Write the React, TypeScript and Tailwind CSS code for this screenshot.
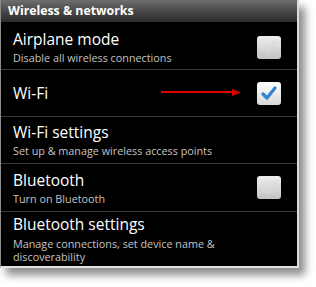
import React from "react";

const font = { fontFamily: '"Open Sans", "Noto Sans", sans-serif' };

function Check({ checked }: { checked: boolean }) {
  return (
    <div
      className={
        "w-[24px] h-[23px] rounded-[3px] flex items-center justify-center " +
        (checked
          ? "bg-gradient-to-b from-[#ffffff] to-[#d8d8d8]"
          : "bg-gradient-to-b from-[#efefef] to-[#c2c2c2]")
      }
    >
      <svg width="18" height="16" viewBox="0 0 18 16">
        <path
          d="M3 9 L7 13 L15 3"
          fill="none"
          stroke={checked ? "#3382d2" : "#d9d9d9"}
          strokeWidth={checked ? 3.2 : 2.2}
          strokeLinecap="round"
          strokeLinejoin="round"
        />
      </svg>
    </div>
  );
}

function Row({
  title,
  sub,
  h,
  check,
  last,
  children,
}: {
  title: string;
  sub?: React.ReactNode;
  h: string;
  check?: boolean;
  last?: boolean;
  children?: React.ReactNode;
}) {
  return (
    <div
      className={
        "relative flex items-center justify-between pl-3 pr-4 " +
        h +
        (last ? "" : " border-b border-[#3a3a3a]")
      }
    >
      <div className="flex flex-col">
        <div className="text-[15.5px] leading-[19px] text-white">{title}</div>
        {sub && (
          <div className="text-[10.8px] leading-[12px] text-[#c4c4c4] mt-[3px]">{sub}</div>
        )}
      </div>
      {check !== undefined && <Check checked={check} />}
      {children}
    </div>
  );
}

export default function App() {
  return (
    <div className="w-[316px] h-[287px] bg-white overflow-hidden" style={font}>
      <div className="w-[299px] h-[268px] bg-black border-l border-[#8a8a8a] border-r-2 border-r-[#dcdcdc] border-b-2 border-b-[#e4e4e4] shadow-[6px_7px_8px_rgba(0,0,0,0.45)] flex flex-col">
        <div className="h-[22px] bg-gradient-to-b from-[#6e6e6e] to-[#2a2a2a] flex items-center pl-[7px]">
          <span className="text-[12.3px] font-bold text-white leading-none">Wireless &amp; networks</span>
        </div>
        <Row title="Airplane mode" sub="Disable all wireless connections" h="h-[48px] pt-[3px]" check={false} />
        <Row title="Wi-Fi" h="h-[47px]" check={true}>
          <div className="absolute left-[160px] top-[19px] w-[80px] h-[6px] flex items-center">
            <div className="flex-1 h-[2px] bg-[#e00000]" />
            <svg width="9" height="7" viewBox="0 0 9 7" className="-ml-[1px]">
              <polygon points="0,0 9,3.5 0,7" fill="#e00000" />
            </svg>
          </div>
        </Row>
        <Row title="Wi-Fi settings" sub="Set up & manage wireless access points" h="h-[47px]" />
        <Row title="Bluetooth" sub="Turn on Bluetooth" h="h-[48px]" check={false} />
        <Row
          title="Bluetooth settings"
          sub={
            <>
              <span className="block leading-[13px]">Manage connections, set device name &amp;</span>
              <span className="block leading-[13px]">discoverability</span>
            </>
          }
          h="h-[54px]"
          last
        />
      </div>
    </div>
  );
}
